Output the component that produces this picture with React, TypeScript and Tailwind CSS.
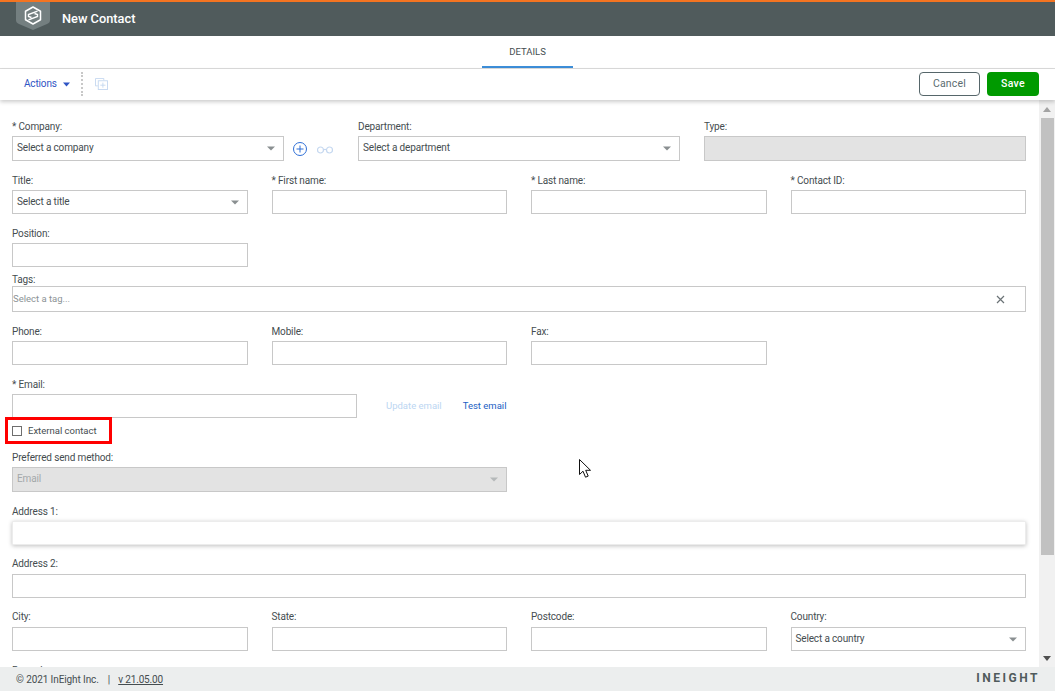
import React from "react";

function Caret({ color = "#8a8f91", w = 8 }: { color?: string; w?: number }) {
  return (
    <svg width={w} height="5" viewBox="0 0 10 6" preserveAspectRatio="none" className="shrink-0">
      <path d="M0 0.500h10L5 5.500z" fill={color} />
    </svg>
  );
}

function Field({ label, className = "", labelClass = "leading-[18px]", children }: { label?: string; className?: string; labelClass?: string; children?: React.ReactNode }) {
  return (
    <div className={`min-w-0 ${className}`}>
      <div className={`h-[18px] text-[10px] tracking-[-0.15px] text-[#454d50] whitespace-nowrap ${labelClass}`}>{label}</div>
      {children ?? <div className="h-[24px] border border-[#c8c8c8] bg-white" />}
    </div>
  );
}

function Select({ text, tall = false }: { text: string; tall?: boolean }) {
  return (
    <div className={`${tall ? "h-[25px]" : "h-[24px]"} border border-[#c8c8c8] bg-white flex items-center justify-between pl-1 pr-[8px]`}>
      <span className={`text-[10px] tracking-[-0.15px] text-[#454d50] whitespace-nowrap ${tall ? "pb-[2px]" : "pb-[1px]"}`}>{text}</span>
      <Caret />
    </div>
  );
}

function Row({ className = "", children }: { className?: string; children: React.ReactNode }) {
  return <div className={`grid grid-cols-4 gap-x-6 ${className}`}>{children}</div>;
}

export default function App() {
  return (
    <div
      className="relative h-[691px] w-[1055px] overflow-hidden bg-white flex flex-col"
      style={{ fontFamily: "Roboto, 'Liberation Sans', sans-serif" }}
    >
      {/* Header */}
      <header className="h-[36px] shrink-0 bg-[#505b5c] border-t-2 border-[#f47421] flex items-center relative">
        <svg width="34" height="28" viewBox="0 0 34 28" className="absolute left-[16px] top-0">
          <path d="M0 0h34v18c0 2-1 3-3 4l-14 6-14-6c-2-1-3-2-3-4z" fill="#747f80" />
          <path d="M17 5l7.500 4.250v8.500L17 22l-7.500-4.250v-8.500z" fill="none" stroke="#fff" strokeWidth="1.500" strokeLinejoin="round" />
          <path d="M21.500 9.200l-9 3.300v2l3 1M12.500 17.800l9-3.300v-2l-3-1" fill="none" stroke="#fff" strokeWidth="1.400" />
        </svg>
        <span className="ml-[62px] text-[12.8px] font-medium text-white whitespace-nowrap">New Contact</span>
      </header>

      {/* Tabs */}
      <div className="h-[33px] shrink-0 border-b border-[#dcdcdc] flex justify-center">
        <div className="w-[91px] h-[32px] pt-[2px] border-b-2 border-[#3d8ed8] flex items-center justify-center text-[9.5px] text-[#454d50]">
          DETAILS
        </div>
      </div>

      {/* Toolbar */}
      <div className="relative z-10 h-[31px] shrink-0 bg-white shadow-[0_2px_4px_rgba(0,0,0,0.2)] flex items-center pl-6 pr-4 pb-[1px]">
        <span className="text-[10px] tracking-[-0.15px] text-[#2f55c4] pb-[1px]">Actions</span>
        <span className="ml-[6px]"><Caret color="#2f55c4" w={7} /></span>
        <div className="ml-[11px] h-[24px] border-l-2 border-dotted border-[#c8c8c8]" />
        <svg width="13" height="12" viewBox="0 0 14 13" className="ml-[12px]" fill="none" stroke="#c5d8f0" strokeWidth="1">
          <path d="M9.500 2.500V.5H.5v8h2.500" />
          <rect x="3.500" y="3" width="10" height="9.500" />
          <path d="M8.500 5v5.500M5.700 7.800h5.600" />
        </svg>
        <div className="ml-auto flex gap-[7px]">
          <button className="h-[24px] w-[61px] rounded-[4px] border border-[#56666a] bg-white text-[10.5px] tracking-[0.2px] text-[#5b6b6f]">Cancel</button>
          <button className="h-[24px] w-[52px] rounded-[4px] bg-[#009a00] text-[10.5px] tracking-[0.3px] font-medium text-white">Save</button>
        </div>
      </div>

      {/* Body */}
      <div className="flex-1 min-h-0 flex">
        <main className="flex-1 min-w-0 overflow-hidden pl-3 pr-[13px] pt-[18px]">
          <div className="grid grid-cols-3 gap-x-6">
            <Field label="* Company:">
              <div className="flex items-center">
                <div className="w-[272px] shrink-0"><Select text="Select a company" tall /></div>
                <svg width="14" height="14" viewBox="0 0 14 14" className="ml-[9px] shrink-0" fill="none" stroke="#2f6fd6">
                  <circle cx="7" cy="7" r="6.500" />
                  <path d="M7 3.500v7M3.500 7h7" />
                </svg>
                <svg width="16" height="8" viewBox="0 0 16 8" className="ml-[10px] mt-[2px] shrink-0" fill="none" stroke="#c5d8f0" strokeWidth="1.200">
                  <circle cx="3.500" cy="4" r="3" />
                  <circle cx="12.500" cy="4" r="3" />
                  <path d="M6.500 3.500h3" />
                </svg>
              </div>
            </Field>
            <Field label="Department:"><Select text="Select a department" tall /></Field>
            <Field label="Type:">
              <div className="h-[25px] border border-[#c8c8c8] bg-[#e3e3e3]" />
            </Field>
          </div>
          <Row className="mt-[11px]">
            <Field label="Title:"><Select text="Select a title" /></Field>
            <Field label="* First name:" />
            <Field label="* Last name:" />
            <Field label="* Contact ID:" />
          </Row>
          <Row className="mt-[11px]">
            <Field label="Position:" />
          </Row>
          <div className="mt-[1px]">
            <Field label="Tags:" labelClass="leading-[24px]">
              <div className="h-[26px] border border-[#c8c8c8] bg-white flex items-center justify-between pr-[20px]">
                <span className="text-[9.5px] text-[#8c9396]">Select a tag...</span>
                <svg width="9" height="9" viewBox="0 0 9 9" stroke="#6b7376" strokeWidth="1.200">
                  <path d="M1 1l7 7M8 1L1 8" />
                </svg>
              </div>
            </Field>
          </div>
          <Row className="mt-[11px]">
            <Field label="Phone:" />
            <Field label="Mobile:" />
            <Field label="Fax:" />
          </Row>
          <div className="mt-[11px] flex items-end">
            <Field label="* Email:" className="w-[345px] shrink-0" />
            <div className="h-[24px] flex items-center text-[9.5px] whitespace-nowrap">
              <span className="ml-[29px] text-[#bcd6f2]">Update email</span>
              <span className="ml-[21px] text-[#1c5fc4]">Test email</span>
            </div>
          </div>
          <div className="h-[31px] pt-[4px] relative">
            <label className="flex items-center h-[18px] text-[9.5px] text-[#454d50]">
              <span className="w-[10px] h-[10px] border border-[#6e6e6e] bg-white" />
              <span className="ml-[6px] pt-[1px]">External contact</span>
            </label>
            <div className="absolute left-[-7px] top-[-1px] w-[107px] h-[27px] border-[3px] border-[#ff0000]" />
          </div>
          <Field label="Preferred send method:" className="w-[495px]">
            <div className="h-[25px] border border-[#c8c8c8] bg-[#e3e3e3] flex items-center justify-between pl-1 pr-[8px]">
              <span className="text-[10px] tracking-[-0.15px] text-[#a3a8aa] pb-[2px]">Email</span>
              <Caret color="#b5b9ba" />
            </div>
          </Field>
          <div className="mt-[11px]">
            <Field label="Address 1:">
              <div className="h-[24px] border border-[#ececec] bg-white shadow-[0_1px_4px_rgba(0,0,0,0.25)] rounded-[1px]" />
            </Field>
          </div>
          <div className="mt-[11px]">
            <Field label="Address 2:" labelClass="leading-[16px]" />
          </div>
          <Row className="mt-[11px]">
            <Field label="City:" labelClass="leading-[16px]" />
            <Field label="State:" labelClass="leading-[16px]" />
            <Field label="Postcode:" labelClass="leading-[16px]" />
            <Field label="Country:" labelClass="leading-[16px]"><Select text="Select a country" /></Field>
          </Row>
          <Row className="mt-[11px]">
            <Field label="Remarks:" />
          </Row>
        </main>
        {/* Scrollbar */}
        <div className="w-[16px] shrink-0 bg-[#f1f1f1] flex flex-col items-center">
          <div className="h-[18px] flex items-center">
            <svg width="8" height="5" viewBox="0 0 8 5"><path d="M4 0l4 5H0z" fill="#a3a3a3" /></svg>
          </div>
          <div className="w-[13px] h-[437px] bg-[#c1c1c1]" />
          <div className="mt-auto h-[18px] flex items-center">
            <svg width="8" height="5" viewBox="0 0 8 5"><path d="M0 0h8L4 5z" fill="#505050" /></svg>
          </div>
        </div>
      </div>

      {/* Footer */}
      <footer className="relative z-10 h-[24px] shrink-0 bg-[#eceeee] flex items-center pl-4 pr-[15px] text-[10px] text-[#454d50]">
        <span className="tracking-[-0.1px]">© 2021 InEight Inc.</span>
        <span className="ml-[9px]">|</span>
        <span className="ml-[8px] underline tracking-[-0.15px]">v 21.05.00</span>
        <span className="ml-auto pb-[2px] text-[12px] font-bold tracking-[2.5px] text-[#505b5c]">INEIGHT</span>
      </footer>

      {/* Mouse pointer */}
      <svg width="13" height="20" viewBox="0 0 13 20" className="absolute left-[579px] top-[459px] z-20">
        <path d="M0.500 0.500v15l3.500-3.300 2.500 6 2.700-1.100-2.500-5.800h4.800z" fill="#fff" stroke="#111" strokeWidth="1" />
      </svg>
    </div>
  );
}
